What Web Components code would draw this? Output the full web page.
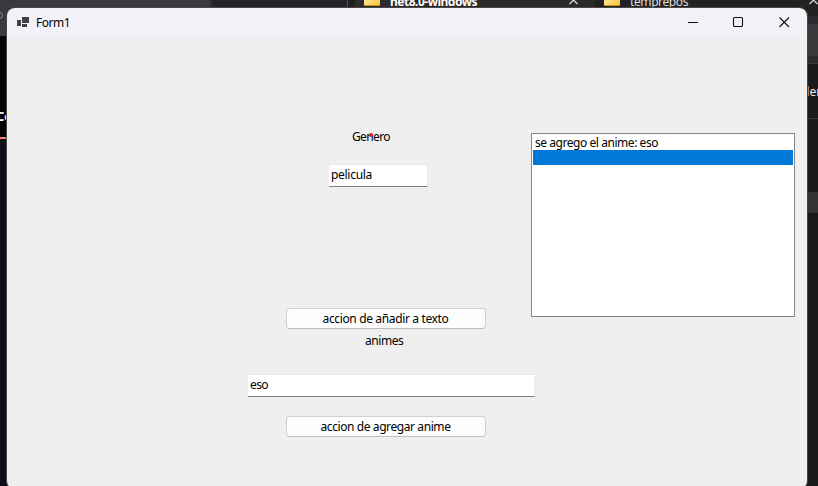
<!DOCTYPE html>
<html lang="es">
<head>
<meta charset="utf-8">
<title>Form1</title>
<style>
html, body { margin: 0; width: 818px; height: 486px; overflow: hidden; background: #1a1a1a; }
body { font: 12px/16px "Noto Sans", "Open Sans", sans-serif; color: #000; }
</style>
</head>
<body>
<desk-top></desk-top>
<script>
const define = (name, html, setup) => customElements.define(name, class extends HTMLElement {
  connectedCallback() {
    if (this.shadowRoot) return;
    this.attachShadow({ mode: 'open' }).innerHTML = html;
    if (setup) setup(this);
  }
});

/* Text run tracked to a given width */
define('fit-text', `<style>
:host { display: inline-block; white-space: pre; }
span { display: inline-block; }
</style><span></span>`, el => {
  const s = el.shadowRoot.querySelector('span');
  s.textContent = el.getAttribute('text');
  const w = parseFloat(el.getAttribute('w'));
  const n = s.textContent.length;
  const gap = (w - s.getBoundingClientRect().width) / n;
  s.style.letterSpacing = gap.toFixed(3) + 'px';
  el.style.width = w + 'px';
});

define('text-box', `<style>
:host { display: block; box-sizing: border-box; height: 23px; padding: 2px 0 0 2px; background: #fff;
  border: 1px solid #e9e9e9; border-left-width: 0; border-bottom-color: #7f7f7f; }
</style><slot></slot>`);

define('push-button', `<style>
:host { display: flex; justify-content: center; box-sizing: border-box; width: 200px; height: 21px; padding: 2px 1px 0 0;
  background: #fdfdfd; border: 1px solid #d0d0d0; border-bottom-color: #bcbcbc; border-radius: 4px; }
</style><slot></slot>`);

define('list-box', `<style>
:host { display: block; box-sizing: border-box; width: 264px; height: 184px; padding: 1px; background: #fff; border: 1px solid #828790; }
.row { height: 15px; line-height: 15px; padding-left: 2px; }
.selected { background: #0078d7; }
</style><div class="row"><slot></slot></div><div class="row selected"></div>`);

define('title-bar', `<style>
:host { display: flex; align-items: center; height: 30px; background: #f3f1f8; }
.app { margin: -3px 6px 0 10px; }
.name { flex: 1; height: 16px; }
svg { display: block; flex: none; }
</style>
<svg class="app" width="13" height="12" viewBox="0 0 13 12" fill="#414141"><path d="M0 4h4v6H0zM5 1h7v6H5zM5 8h5v3H5z"/></svg>
<div class="name"><slot></slot></div>
<svg width="138" height="30" viewBox="0 0 138 30" fill="none" stroke="#111" stroke-width="1.1">
<path d="M19 14.5h10"/><rect x="64.5" y="9.5" width="9" height="9" rx="1"/><path d="M110.5 9.5l9.5 9.5M120 9.5l-9.5 9.5"/></svg>`);

define('form-body', `<style>
:host { display: grid; height: 451px; background: #efefef; }
.fields, .side { grid-area: 1 / 1; }
.fields { display: flex; flex-direction: column; align-items: flex-start; padding: 91px 0 0 241px; }
.genre { position: relative; margin-left: 104px; height: 35px; }
.dot { position: absolute; left: 17px; top: 4px; width: 4px; height: 4px; border-radius: 50%; background: #e81a20; }
.genrebox { width: 99px; margin: 0 0 121px 81px; }
.add { margin-left: 38px; }
.animes { margin: 4px 0 0 117px; height: 41px; }
.animebox { width: 287px; margin-bottom: 19px; }
.side { justify-self: end; padding: 95px 12px 0 0; }
</style>
<div class="fields">
  <div class="genre"><fit-text text="Genero" w="38"></fit-text><i class="dot"></i></div>
  <text-box class="genrebox"><fit-text text="pelicula" w="41"></fit-text></text-box>
  <push-button class="add"><fit-text text="accion de añadir a texto" w="126"></fit-text></push-button>
  <div class="animes"><fit-text text="animes" w="38.3"></fit-text></div>
  <text-box class="animebox"><fit-text text="eso" w="18"></fit-text></text-box>
  <push-button class="add"><fit-text text="accion de agregar anime" w="130"></fit-text></push-button>
</div>
<div class="side"><list-box><fit-text text="se agrego el anime: eso" w="123"></fit-text></list-box></div>`);

define('app-window', `<style>
:host { display: block; box-sizing: border-box; border-radius: 8px; overflow: hidden; box-shadow: 0 0 0 1px #484848; }
</style><title-bar><fit-text text="Form1" w="34"></fit-text></title-bar><form-body></form-body>`);

/* Folder tab of the file explorer behind the form */
define('folder-tab', `<style>
:host { display: flex; height: 8px; overflow: hidden; color: #ddd; }
.folder { flex: none; width: 16px; height: 6px; margin: 0 10px 0 9px; background: linear-gradient(120deg, #ffe391, #fbc63d); border-bottom: 1px solid #d89413; border-radius: 0 0 1px 1px; box-sizing: border-box; }
.label { margin-top: -6px; flex: 1; }
svg { flex: none; margin-right: 17px; }
</style><i class="folder"></i><div class="label"><slot></slot></div>
<svg width="9" height="8" viewBox="0 0 9 8" fill="none" stroke="#ddd" stroke-width="1.2"><path d="M0.5 4L4.5 0L8.5 4"/></svg>`);

define('desk-top', `<style>
:host { display: block; position: relative; width: 818px; height: 486px; overflow: hidden; }
.back { display: flex; height: 40px; background: #222; overflow: hidden; }
.back > * { flex: none; }
.dark { width: 347px; background: linear-gradient(90deg, #3b393e 209px, #242328 213px); }
.sep { width: 1px; background: #555; }
.gap { width: 7px; background: #1d1d1d; }
.t1 { width: 240px; background: #2b2b2b; font-weight: bold; color: #fff; }
.t2 { width: 240px; }
.left { position: absolute; left: 0; top: 36px; width: 8px; height: 450px; overflow: hidden; background: #02040a; color: #fff; }
.co { height: 101px; padding-top: 72px; box-sizing: border-box; font-size: 13px; font-weight: bold; }
.co span { margin-left: -4px; }
.accent { height: 2px; background: #f78166; }
.lower { height: 347px; background: #0d1117; }
.right { position: absolute; left: 806px; top: 8px; width: 12px; height: 478px; overflow: hidden; color: #eee;
 background: linear-gradient(#222 0 8px, #2c2c2c 8px 16px, #393939 16px 48px, #2c2c2c 48px 55px, #3a3a3a 55px 56px, #1a1a1a 56px 110px, #363636 110px 111px, #1a1a1a 111px 184px, #333 184px 205px, #1a1a1a 205px); }
.right div { margin: 76px 0 0 -4px; }
.ring { position: absolute; left: -4px; top: 12px; width: 5px; height: 5px; border: 1px solid #888; border-radius: 50%; }
.mark { position: absolute; top: 7px; height: 1px; background: #777; }
app-window { position: absolute; left: 7px; top: 8px; width: 800px; height: 481px; }
</style>
<div class="back"><div class="dark"></div><div class="sep"></div><div class="gap"></div>
<folder-tab class="t1"><fit-text text="net8.0-windows" w="87"></fit-text></folder-tab>
<folder-tab class="t2"><fit-text text="temprepos" w="58"></fit-text></folder-tab></div>
<div class="left"><div class="co"><span>Co</span></div><div class="accent"></div><div class="lower"></div></div>
<div class="right"><div>den</div></div>
<i class="ring"></i><i class="mark" style="left:26px;width:5px"></i><i class="mark" style="left:182px;width:8px"></i>
<app-window></app-window>`);
</script>
</body>
</html>
